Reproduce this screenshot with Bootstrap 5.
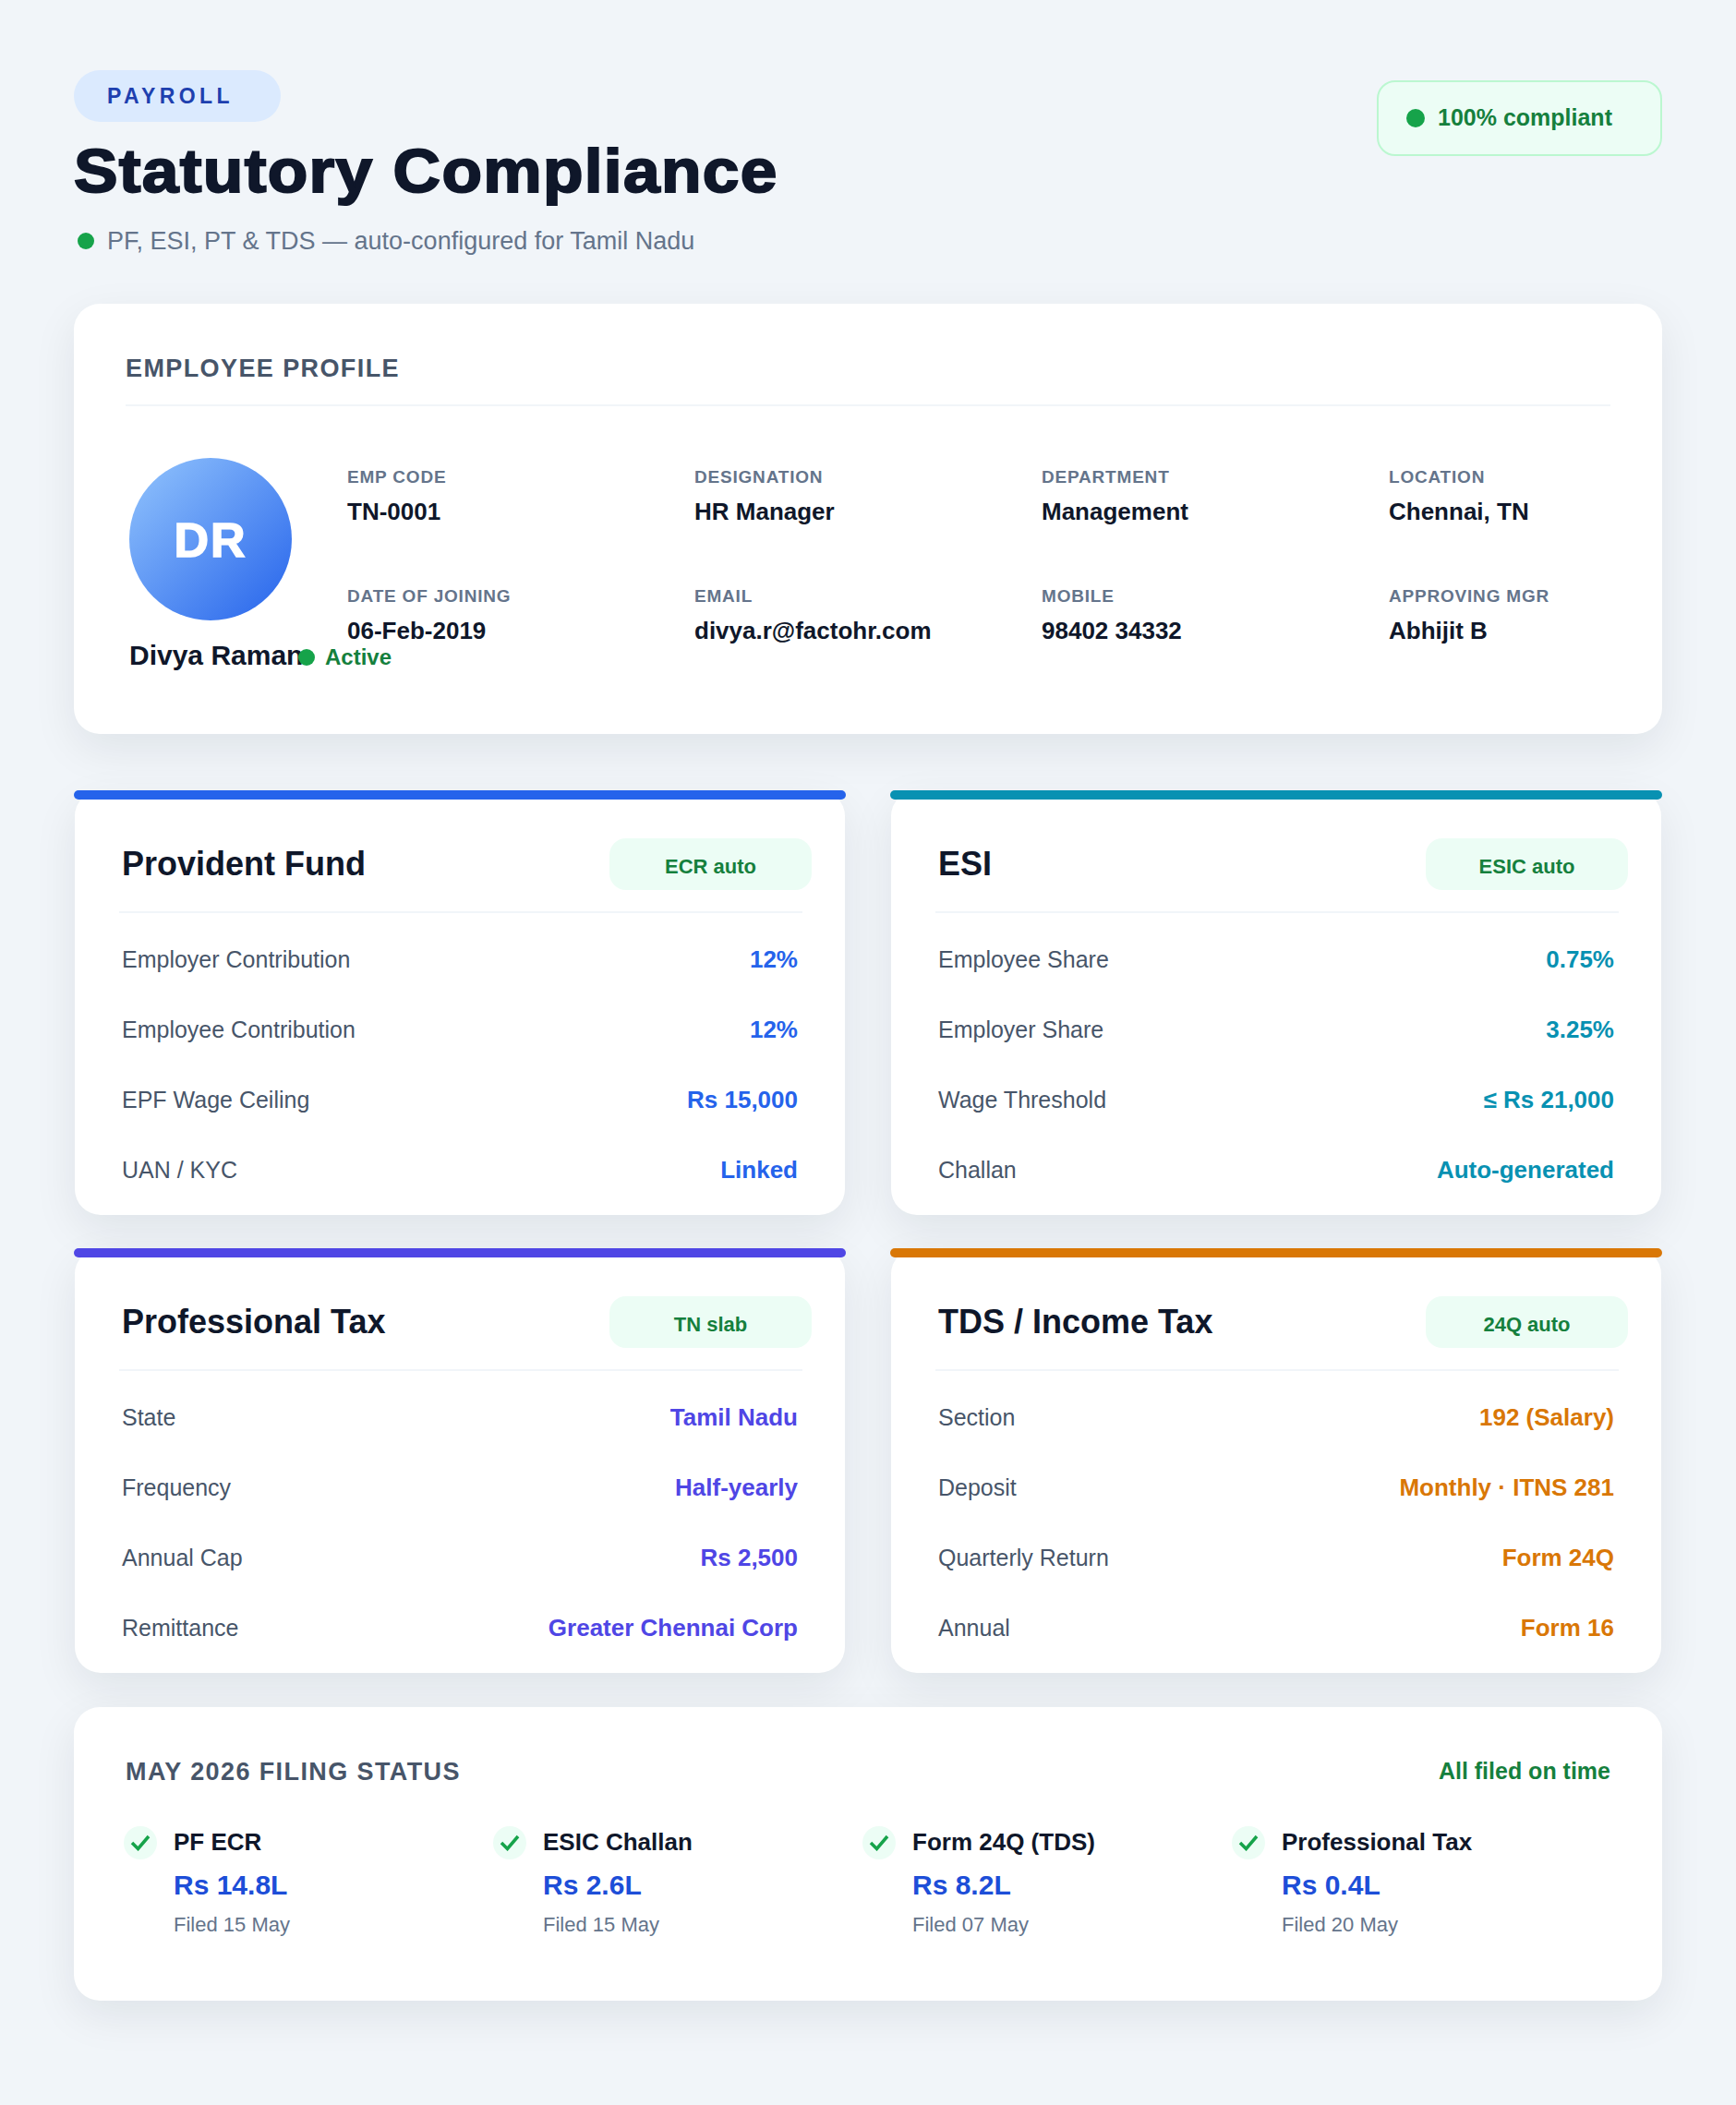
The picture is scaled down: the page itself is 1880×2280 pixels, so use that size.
<!DOCTYPE html>
<html lang="en">
<head>
    <meta charset="UTF-8">
    <meta name="viewport" content="width=device-width, initial-scale=1.0">
    <title>Statutory Compliance</title>
    <link rel="stylesheet" href="https://cdn.jsdelivr.net/npm/bootstrap@5.3.0/dist/css/bootstrap.min.css">
    <style>
        body { background: #f1f5f9; font-family: "Liberation Sans", Arial, sans-serif; color: #0f172a; }
        .page-wrap { padding: 76px 80px 113px; }
        .tag-pill { display: inline-block; height: 56px; line-height: 56px; width: 224px; padding-left: 36px; border-radius: 28px; background: #dbeafe; color: #1e40af; font-size: 23px; font-weight: 700; letter-spacing: 4.4px; }
        .page-title { font-size: 66px; font-weight: 700; line-height: 80px; margin: 13px 0 18px; -webkit-text-stroke: 2px #0f172a; letter-spacing: 1.2px; transform: scaleX(1.08); transform-origin: left center; white-space: nowrap; }
        .page-sub { font-size: 27px; line-height: 36px; color: #64748b; gap: 14px; }
        .dot-green { flex: none; width: 18px; height: 18px; border-radius: 50%; background: #16a34a; }
        .comply-box { width: 309px; height: 82px; margin-top: 11px; padding-left: 30px; gap: 14px; border: 2px solid #bbf7d0; border-radius: 20px; background: #ecfdf5; color: #15803d; font-size: 25px; font-weight: 700; }
        .comply-box .dot-green { width: 20px; height: 20px; }
        .sheet { background: #fff; border: 0; border-radius: 28px; box-shadow: 0 16px 48px rgba(15, 23, 42, .08); }
        .profile-sheet { height: 466px; margin-top: 50px; padding: 52px 56px 0; }
        .sheet-head { font-size: 27px; line-height: 36px; font-weight: 700; color: #475569; letter-spacing: 1.4px; }
        .profile-head { padding-bottom: 21px; border-bottom: 2px solid #f1f5f9; }
        .profile-main { padding: 56px 4px 0; }
        .avatar-col { width: 183px; flex: none; }
        .avatar-round { width: 176px; height: 176px; border-radius: 50%; background: linear-gradient(135deg, #93c5fd, #2563eb); color: #fff; font-size: 52px; font-weight: 700; letter-spacing: 2px; -webkit-text-stroke: 1.5px #fff; padding-top: 2px; }
        .emp-name { font-size: 30px; font-weight: 700; line-height: 36px; margin-top: 20px; white-space: nowrap; width: 183px; flex: none; }
        .emp-status { color: #15803d; font-size: 24px; line-height: 30px; font-weight: 700; gap: 11px; white-space: nowrap; margin-top: 25px; }
        .fact-grid { display: grid; grid-template-columns: repeat(4, 376px); row-gap: 35px; padding-left: 53px; padding-top: 9px; }
        .fact-label { font-size: 19px; line-height: 24px; font-weight: 700; color: #64748b; letter-spacing: .8px; }
        .fact-value { font-size: 26px; line-height: 34px; font-weight: 700; margin-top: 8px; white-space: nowrap; }
        .rule-grid { display: grid; grid-template-columns: 1fr 1fr; column-gap: 48px; row-gap: 36px; margin-top: 61px; }
        .rule-sheet { position: relative; height: 460px; margin: 0 1px; padding: 52px 47px 0 48px; }
        .rule-bar { position: absolute; top: 0; left: -1px; right: -1px; height: 10px; border-radius: 5px; background: var(--tone); }
        .rule-head { height: 81px; margin-right: -1px; padding: 0 0 0 3px; border-bottom: 2px solid #f1f5f9; align-items: flex-start; }
        .rule-title { font-size: 36px; font-weight: 700; line-height: 56px; margin: 0; }
        .rule-badge { width: 219px; height: 56px; margin-right: -10px; padding-top: 5px; border-radius: 18px; background: #ecfdf5; color: #15803d; font-size: 22px; font-weight: 700; }
        .rule-row { height: 76px; padding: 0 4px 0 3px; font-size: 25px; color: #475569; }
        .rule-rows { padding-top: 13px; }
        .rule-row b { font-size: 26px; color: var(--tone); margin-bottom: 2px; }
        .filing-sheet { height: 318px; margin-top: 37px; padding: 51px 56px 0; }
        .filing-done { color: #15803d; font-size: 25px; font-weight: 700; }
        .filing-grid { display: grid; grid-template-columns: repeat(4, 400px); margin: 40px 0 0 -2px; }
        .tick-round { flex: none; width: 36px; height: 36px; border-radius: 50%; background: #ecfdf5; margin-right: 18px; }
        .filing-name { font-size: 26px; font-weight: 700; line-height: 34px; }
        .filing-amt { font-size: 30px; font-weight: 700; line-height: 36px; color: #1d4ed8; margin-top: 12px; }
        .filing-date { font-size: 22px; line-height: 28px; color: #64748b; margin-top: 11px; }
    </style>
</head>
<body>
    <div class="page-wrap">

        <!-- Header -->
        <div class="d-flex justify-content-between align-items-start">
            <div>
                <span class="tag-pill">PAYROLL</span>
                <h1 class="page-title">Statutory Compliance</h1>
                <div class="page-sub d-flex align-items-center"><span class="dot-green ms-1"></span>PF, ESI, PT &amp; TDS — auto-configured for Tamil Nadu</div>
            </div>
            <div class="comply-box d-flex align-items-center"><span class="dot-green"></span>100% compliant</div>
        </div>

        <!-- Employee profile -->
        <div class="card sheet profile-sheet">
            <div class="sheet-head profile-head">EMPLOYEE PROFILE</div>
            <div class="profile-main d-flex">
                <div class="avatar-col">
                    <div class="avatar-round d-flex align-items-center justify-content-center">DR</div>
                    <div class="d-flex align-items-start">
                        <div class="emp-name">Divya Raman</div>
                        <div class="emp-status d-flex align-items-center"><span class="dot-green"></span>Active</div>
                    </div>
                </div>
                <div class="fact-grid">
                    <div><div class="fact-label">EMP CODE</div><div class="fact-value">TN-0001</div></div>
                    <div><div class="fact-label">DESIGNATION</div><div class="fact-value">HR Manager</div></div>
                    <div><div class="fact-label">DEPARTMENT</div><div class="fact-value">Management</div></div>
                    <div><div class="fact-label">LOCATION</div><div class="fact-value">Chennai, TN</div></div>
                    <div><div class="fact-label">DATE OF JOINING</div><div class="fact-value">06-Feb-2019</div></div>
                    <div><div class="fact-label">EMAIL</div><div class="fact-value">divya.r@factohr.com</div></div>
                    <div><div class="fact-label">MOBILE</div><div class="fact-value">98402 34332</div></div>
                    <div><div class="fact-label">APPROVING MGR</div><div class="fact-value">Abhijit B</div></div>
                </div>
            </div>
        </div>

        <!-- Statutory cards -->
        <div class="rule-grid">
            <div class="card sheet rule-sheet" style="--tone: #2563eb">
                <span class="rule-bar"></span>
                <div class="rule-head d-flex justify-content-between">
                    <h2 class="rule-title">Provident Fund</h2>
                    <span class="rule-badge d-flex align-items-center justify-content-center">ECR auto</span>
                </div>
                <div class="rule-rows">
                    <div class="rule-row d-flex justify-content-between align-items-center"><span>Employer Contribution</span><b>12%</b></div>
                    <div class="rule-row d-flex justify-content-between align-items-center"><span>Employee Contribution</span><b>12%</b></div>
                    <div class="rule-row d-flex justify-content-between align-items-center"><span>EPF Wage Ceiling</span><b>Rs 15,000</b></div>
                    <div class="rule-row d-flex justify-content-between align-items-center"><span>UAN / KYC</span><b>Linked</b></div>
                </div>
            </div>
            <div class="card sheet rule-sheet" style="--tone: #0891b2">
                <span class="rule-bar"></span>
                <div class="rule-head d-flex justify-content-between">
                    <h2 class="rule-title">ESI</h2>
                    <span class="rule-badge d-flex align-items-center justify-content-center">ESIC auto</span>
                </div>
                <div class="rule-rows">
                    <div class="rule-row d-flex justify-content-between align-items-center"><span>Employee Share</span><b>0.75%</b></div>
                    <div class="rule-row d-flex justify-content-between align-items-center"><span>Employer Share</span><b>3.25%</b></div>
                    <div class="rule-row d-flex justify-content-between align-items-center"><span>Wage Threshold</span><b>≤ Rs 21,000</b></div>
                    <div class="rule-row d-flex justify-content-between align-items-center"><span>Challan</span><b>Auto-generated</b></div>
                </div>
            </div>
            <div class="card sheet rule-sheet" style="--tone: #4f46e5">
                <span class="rule-bar"></span>
                <div class="rule-head d-flex justify-content-between">
                    <h2 class="rule-title">Professional Tax</h2>
                    <span class="rule-badge d-flex align-items-center justify-content-center">TN slab</span>
                </div>
                <div class="rule-rows">
                    <div class="rule-row d-flex justify-content-between align-items-center"><span>State</span><b>Tamil Nadu</b></div>
                    <div class="rule-row d-flex justify-content-between align-items-center"><span>Frequency</span><b>Half-yearly</b></div>
                    <div class="rule-row d-flex justify-content-between align-items-center"><span>Annual Cap</span><b>Rs 2,500</b></div>
                    <div class="rule-row d-flex justify-content-between align-items-center"><span>Remittance</span><b>Greater Chennai Corp</b></div>
                </div>
            </div>
            <div class="card sheet rule-sheet" style="--tone: #d97706">
                <span class="rule-bar"></span>
                <div class="rule-head d-flex justify-content-between">
                    <h2 class="rule-title">TDS / Income Tax</h2>
                    <span class="rule-badge d-flex align-items-center justify-content-center">24Q auto</span>
                </div>
                <div class="rule-rows">
                    <div class="rule-row d-flex justify-content-between align-items-center"><span>Section</span><b>192 (Salary)</b></div>
                    <div class="rule-row d-flex justify-content-between align-items-center"><span>Deposit</span><b>Monthly · ITNS 281</b></div>
                    <div class="rule-row d-flex justify-content-between align-items-center"><span>Quarterly Return</span><b>Form 24Q</b></div>
                    <div class="rule-row d-flex justify-content-between align-items-center"><span>Annual</span><b>Form 16</b></div>
                </div>
            </div>
        </div>

        <!-- Filing status -->
        <div class="card sheet filing-sheet">
            <div class="d-flex justify-content-between align-items-center">
                <div class="sheet-head">MAY 2026 FILING STATUS</div>
                <div class="filing-done">All filed on time</div>
            </div>
            <div class="filing-grid">
                <div class="d-flex">
                    <span class="tick-round d-flex align-items-center justify-content-center"><svg width="22" height="18" viewBox="0 0 22 18" fill="none" stroke="#16a34a" stroke-width="3.5"><path d="M2 9 8.5 15.5 20 2"/></svg></span>
                    <div><div class="filing-name">PF ECR</div><div class="filing-amt">Rs 14.8L</div><div class="filing-date">Filed 15 May</div></div>
                </div>
                <div class="d-flex">
                    <span class="tick-round d-flex align-items-center justify-content-center"><svg width="22" height="18" viewBox="0 0 22 18" fill="none" stroke="#16a34a" stroke-width="3.5"><path d="M2 9 8.5 15.5 20 2"/></svg></span>
                    <div><div class="filing-name">ESIC Challan</div><div class="filing-amt">Rs 2.6L</div><div class="filing-date">Filed 15 May</div></div>
                </div>
                <div class="d-flex">
                    <span class="tick-round d-flex align-items-center justify-content-center"><svg width="22" height="18" viewBox="0 0 22 18" fill="none" stroke="#16a34a" stroke-width="3.5"><path d="M2 9 8.5 15.5 20 2"/></svg></span>
                    <div><div class="filing-name">Form 24Q (TDS)</div><div class="filing-amt">Rs 8.2L</div><div class="filing-date">Filed 07 May</div></div>
                </div>
                <div class="d-flex">
                    <span class="tick-round d-flex align-items-center justify-content-center"><svg width="22" height="18" viewBox="0 0 22 18" fill="none" stroke="#16a34a" stroke-width="3.5"><path d="M2 9 8.5 15.5 20 2"/></svg></span>
                    <div><div class="filing-name">Professional Tax</div><div class="filing-amt">Rs 0.4L</div><div class="filing-date">Filed 20 May</div></div>
                </div>
            </div>
        </div>

    </div>
    <script src="https://cdn.jsdelivr.net/npm/bootstrap@5.3.0/dist/js/bootstrap.bundle.min.js"></script>
</body>
</html>
